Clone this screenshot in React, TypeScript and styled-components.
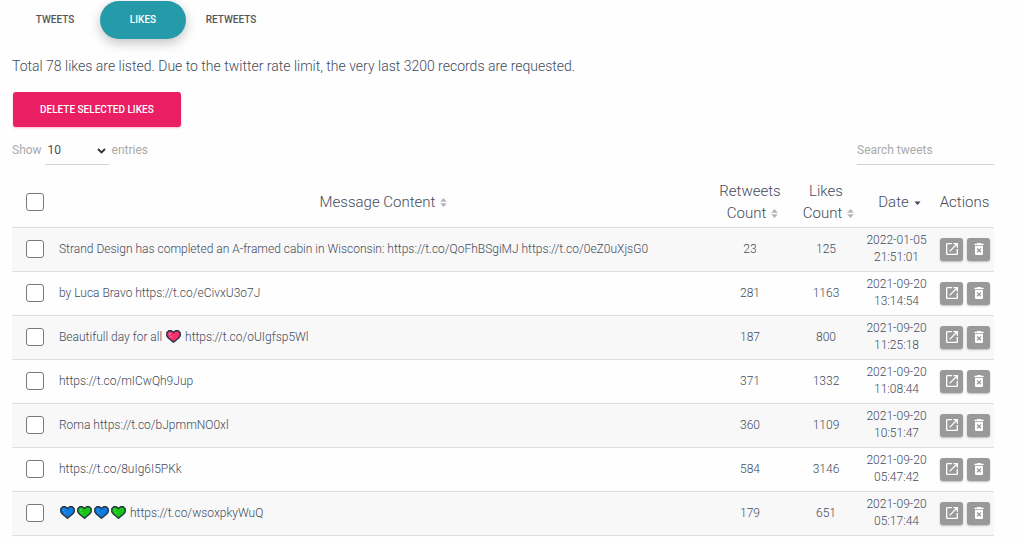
import React, { useState } from "react";
import styled, { createGlobalStyle, css } from "styled-components";
import { MdDeleteForever, MdOpenInNew } from "react-icons/md";

const GlobalStyle = createGlobalStyle`
  * { box-sizing: border-box; }
  body {
    margin: 0;
    background: #fefefe;
    color: #434b5c;
    font-family: Roboto, "Liberation Sans", sans-serif;
    font-weight: 300;
    font-size: 13px;
  }
  button, input, select { font-family: inherit; }
`;

const Page = styled.main`
  padding: 1px 30px 0 12px;
`;

const Tabs = styled.nav`
  display: flex;
  gap: 2px;
`;

const Tab = styled.button<{ $active?: boolean }>`
  min-width: 86px;
  height: 38px;
  padding: 0;
  border: 0;
  border-radius: 19px;
  background: transparent;
  color: #555;
  font-size: 10px;
  font-weight: 500;
  line-height: 20px;
  text-transform: uppercase;
  cursor: pointer;
  ${(p) =>
    p.$active &&
    css`
      background: #259aa8;
      color: #fff;
      box-shadow: 0 4px 12px rgba(0, 0, 0, 0.24);
    `}
`;

const Intro = styled.p`
  margin: 16px 0 0;
  font-size: 14px;
  line-height: 22px;
`;

const DangerButton = styled.button`
  display: block;
  height: 35px;
  margin: 15px 0 0 1px;
  padding: 0 27px;
  border: 0;
  border-radius: 3px;
  background: #e91e63;
  color: #fff;
  font-size: 10px;
  font-weight: 500;
  text-transform: uppercase;
  box-shadow: 0 1px 2px rgba(233, 30, 99, 0.3);
  cursor: pointer;
`;

const Toolbar = styled.div`
  display: flex;
  justify-content: space-between;
  margin-top: 9px;
  height: 29px;
`;

const LengthLabel = styled.label`
  display: flex;
  gap: 3px;
  color: #aaa;
  font-size: 12px;
  font-weight: 400;
  line-height: 28px;
`;

const SelectBox = styled.span`
  position: relative;
  width: 64px;
  height: 29px;

  svg {
    position: absolute;
    right: 3px;
    top: 12px;
    pointer-events: none;
  }
`;

const LengthSelect = styled.select`
  width: 100%;
  height: 100%;
  padding: 0 3px;
  appearance: none;
  border: 0;
  border-bottom: 1px solid #d2d2d2;
  background: transparent;
  color: #495057;
  font-size: 12px;
`;

const SearchInput = styled.input`
  width: 137px;
  height: 29px;
  padding: 0;
  border: 0;
  border-bottom: 1px solid #d2d2d2;
  background: transparent;
  color: #495057;
  font-size: 12px;

  &::placeholder {
    color: #aaa;
    opacity: 1;
  }
`;

const Table = styled.table`
  width: 100%;
  margin-top: 12px;
  table-layout: fixed;
  border-collapse: collapse;
`;

const Col = styled.col<{ $width?: number }>`
  width: ${(p) => (p.$width ? `${p.$width}px` : "auto")};
`;

const HeadCell = styled.th<{ $padding?: string }>`
  height: 50px;
  padding: ${(p) => p.$padding ?? "0"};
  font-size: 15px;
  font-weight: 300;
  line-height: 22px;
  text-align: center;
`;

const Row = styled.tr`
  border-top: 1px solid #dfdfdf;
  &:nth-child(odd) { background: #f8f8f8; }
  &:last-child { border-bottom: 1px solid #dfdfdf; }
`;

const Cell = styled.td<{ $align?: "left" | "center" }>`
  height: 44px;
  padding: 0 0 0 ${(p) => (p.$align === "left" ? 5 : 0)}px;
  font-size: 12px;
  line-height: 17px;
  text-align: ${(p) => p.$align ?? "center"};
`;

const DateText = styled.time`
  display: block;
  width: 65px;
  text-align: center;
`;

const Check = styled.input`
  display: block;
  width: 18px;
  height: 18px;
  margin: 0 0 0 14px;
  appearance: none;
  border: 1px solid #777a83;
  border-radius: 3px;
  background: #fff;

  &:checked { background: #259aa8; }
`;

const Actions = styled.div`
  display: flex;
  justify-content: center;
  gap: 4px;
  padding-left: 6px;
`;

const IconButton = styled.button`
  display: flex;
  align-items: center;
  justify-content: center;
  width: 23px;
  height: 23px;
  padding: 0;
  border: 0;
  border-radius: 3px;
  background: #999;
  color: #fff;
  font-size: 16px;
  box-shadow: 0 1px 2px rgba(0, 0, 0, 0.25);
  cursor: pointer;
`;

const SortSvg = styled.svg`
  margin: 0 -5px 0 5px;
`;

const HeartSvg = styled.svg`
  margin: 0 1px;
  vertical-align: -2px;
`;

const SortBoth = () => (
  <SortSvg width="7" height="9" viewBox="0 0 7 9" fill="#b3b5ba" aria-hidden="true">
    <path d="M3.5 0 6.8 3.8H.2zM.2 5.2h6.6L3.5 9z" />
  </SortSvg>
);

const SortDown = () => (
  <SortSvg width="7" height="7" viewBox="0 0 7 7" fill="#3c4858" aria-hidden="true">
    <path d="M.4 1.5h6.2L3.5 5z" />
  </SortSvg>
);

const hearts = {
  pink: { fill: "#f5316f", shine: "#ff86a8" },
  blue: { fill: "#0f7bdc", shine: "#3b9bf0" },
  green: { fill: "#17c617", shine: "#5be35b" },
};

const Heart = ({ tone }: { tone: keyof typeof hearts }) => (
  <HeartSvg width="15" height="13" viewBox="0 0 15 13" role="img" aria-label={`${tone} heart`}>
    <path
      d="M2.8.8h2.6l2.1 1.7L9.6.8h2.6l2 2v3L12.6 8 7.5 12.3 2.4 8 .8 5.8v-3z"
      fill={hearts[tone].fill}
      stroke="#263442"
      strokeWidth="1.4"
      strokeLinejoin="round"
    />
    <path d="M3 3.2h1.5v1.5H3zM4.3 6.3h1.2v1.2H4.3z" fill={hearts[tone].shine} />
  </HeartSvg>
);

const rows: { message: React.ReactNode; retweets: number; likes: number; date: string; time: string }[] = [
  {
    message: "Strand Design has completed an A-framed cabin in Wisconsin: https://t.co/QoFhBSgiMJ https://t.co/0eZ0uXjsG0",
    retweets: 23, likes: 125, date: "2022-01-05", time: "21:51:01",
  },
  { message: "by Luca Bravo https://t.co/eCivxU3o7J", retweets: 281, likes: 1163, date: "2021-09-20", time: "13:14:54" },
  {
    message: <>Beautifull day for all <Heart tone="pink" /> https://t.co/oUIgfsp5Wl</>,
    retweets: 187, likes: 800, date: "2021-09-20", time: "11:25:18",
  },
  { message: "https://t.co/mICwQh9Jup", retweets: 371, likes: 1332, date: "2021-09-20", time: "11:08:44" },
  { message: "Roma https://t.co/bJpmmNO0xl", retweets: 360, likes: 1109, date: "2021-09-20", time: "10:51:47" },
  { message: "https://t.co/8uIg6I5PKk", retweets: 584, likes: 3146, date: "2021-09-20", time: "05:47:42" },
  {
    message: <><Heart tone="blue" /><Heart tone="green" /><Heart tone="blue" /><Heart tone="green" /> https://t.co/wsoxpkyWuQ</>,
    retweets: 179, likes: 651, date: "2021-09-20", time: "05:17:44",
  },
];

export default function App() {
  const [tab, setTab] = useState("Likes");
  return (
    <>
      <GlobalStyle />
      <Page>
        <Tabs>
          {["Tweets", "Likes", "Retweets"].map((name) => (
            <Tab key={name} $active={name === tab} onClick={() => setTab(name)}>
              {name}
            </Tab>
          ))}
        </Tabs>
        <Intro>
          Total 78 likes are listed. Due to the twitter rate limit, the very last 3200 records are requested.
        </Intro>
        <DangerButton>Delete selected likes</DangerButton>
        <Toolbar>
          <LengthLabel>
            Show
            <SelectBox>
              <LengthSelect defaultValue="10">
                <option>10</option>
                <option>25</option>
                <option>50</option>
              </LengthSelect>
              <svg width="9" height="6" viewBox="0 0 9 6" fill="none" stroke="#333" strokeWidth="1.8" aria-hidden="true">
                <path d="M1 1l3.5 3.5L8 1" />
              </svg>
            </SelectBox>
            entries
          </LengthLabel>
          <SearchInput type="search" placeholder="Search tweets" aria-label="Search tweets" />
        </Toolbar>
        <Table>
          <colgroup>
            <Col $width={42} />
            <Col />
            <Col $width={76} />
            <Col $width={76} />
            <Col $width={66} />
            <Col $width={64} />
          </colgroup>
          <thead>
            <tr>
              <HeadCell><Check type="checkbox" aria-label="Select all" /></HeadCell>
              <HeadCell $padding="0 4px 0 0">Message Content<SortBoth /></HeadCell>
              <HeadCell>Retweets<br />Count<SortBoth /></HeadCell>
              <HeadCell>Likes<br />Count<SortBoth /></HeadCell>
              <HeadCell>Date<SortDown /></HeadCell>
              <HeadCell $padding="0 0 0 5px">Actions</HeadCell>
            </tr>
          </thead>
          <tbody>
            {rows.map((row) => (
              <Row key={row.time}>
                <Cell><Check type="checkbox" aria-label={`Select ${row.date} ${row.time}`} /></Cell>
                <Cell $align="left">{row.message}</Cell>
                <Cell>{row.retweets}</Cell>
                <Cell>{row.likes}</Cell>
                <Cell><DateText>{row.date}<br />{row.time}</DateText></Cell>
                <Cell>
                  <Actions>
                    <IconButton aria-label="Open"><MdOpenInNew /></IconButton>
                    <IconButton aria-label="Delete"><MdDeleteForever /></IconButton>
                  </Actions>
                </Cell>
              </Row>
            ))}
          </tbody>
        </Table>
      </Page>
    </>
  );
}
